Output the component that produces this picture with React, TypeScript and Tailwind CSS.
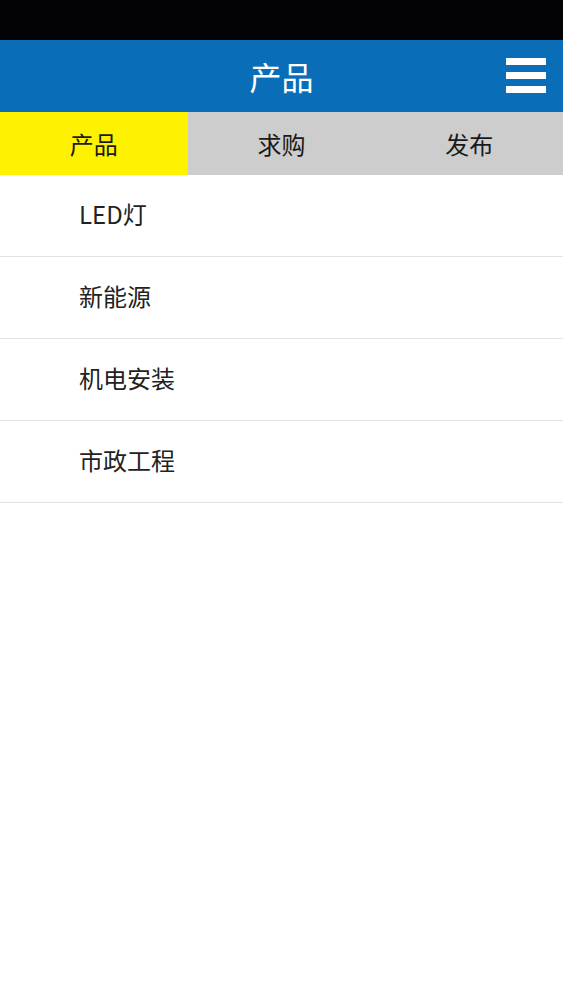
import { useState } from "react";

const tabs = ["产品", "求购", "发布"];
const items = ["LED灯", "新能源", "机电安装", "市政工程"];

export default function App() {
    const [active, setActive] = useState(0);

    return (
        <div
            className="min-h-screen bg-white"
            style={{ fontFamily: '"Noto Sans CJK SC", "Noto Sans", sans-serif' }}
        >
            {/* status bar */}
            <div className="h-[40px] bg-[#030305]" />

            {/* title bar */}
            <header className="relative h-[72px] bg-[#0a6db7] flex items-center justify-center">
                <h1 className="text-white text-[32px] leading-none">产品</h1>
                <button className="absolute right-[17px] top-[18px] w-[40px] h-[35px] flex flex-col justify-between">
                    <span className="block h-[7px] w-full bg-white" />
                    <span className="block h-[7px] w-full bg-white" />
                    <span className="block h-[7px] w-full bg-white" />
                </button>
            </header>

            {/* tabs */}
            <nav className="grid grid-cols-3 h-[63px] bg-[#cdcdcd]">
                {tabs.map((tab, i) => (
                    <button
                        key={tab}
                        onClick={() => setActive(i)}
                        className={`flex items-center justify-center text-[24px] text-[#1a1a1a] ${
                            active === i ? "bg-[#fff200]" : "bg-[#cdcdcd]"
                        }`}
                    >
                        {tab}
                    </button>
                ))}
            </nav>

            {/* category list */}
            <ul>
                {items.map((item) => (
                    <li
                        key={item}
                        className="h-[82px] flex items-center pl-[79px] pb-[3px] border-b border-[#e3e3e3] text-[24px] text-[#222]"
                    >
                        {item}
                    </li>
                ))}
            </ul>
        </div>
    );
}
